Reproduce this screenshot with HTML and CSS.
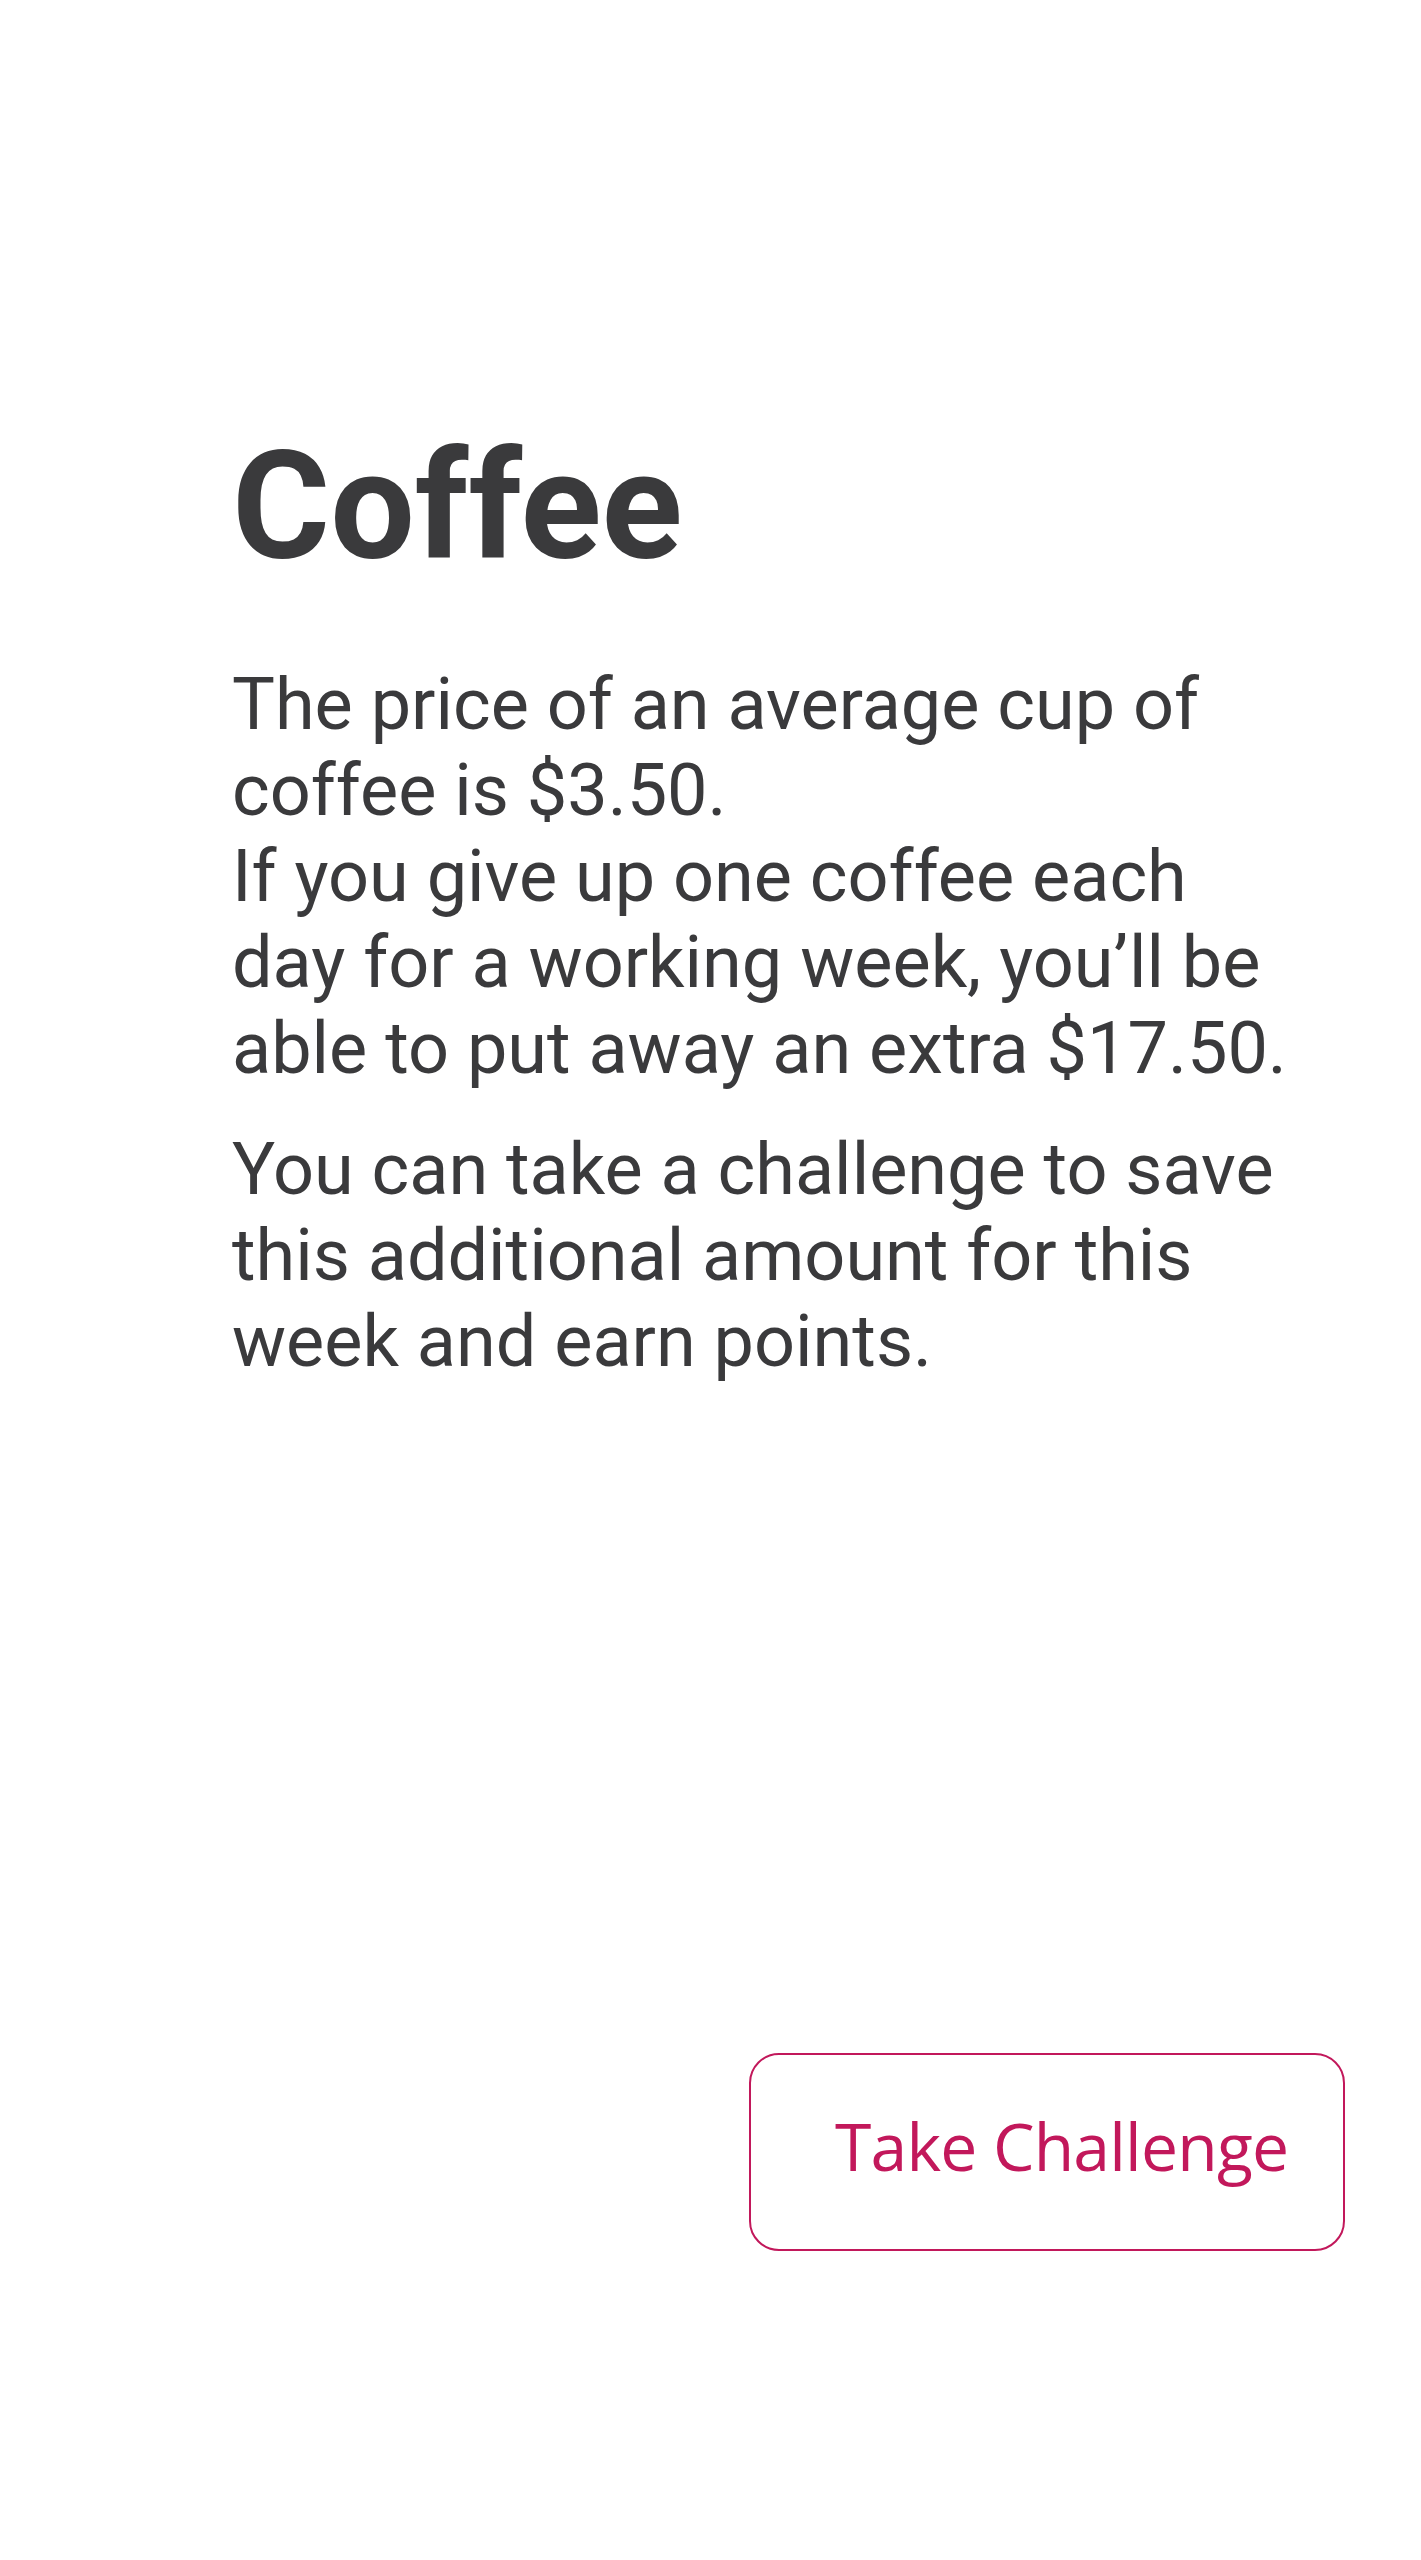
FILE: index.html
```html
<!DOCTYPE html>
<html lang="en">
<head>
<meta charset="utf-8">
<title>Coffee</title>
<link rel="stylesheet" href="styles.css">
</head>
<body>
<main class="screen">
  <section class="content">
    <h1 class="title">Coffee</h1>
    <p class="text">The price of an average cup of<br>coffee is $3.50.<br>If you give up one coffee each<br>day for a working week, you’ll be<br>able to put away an extra $17.50.</p>
    <p class="text second">You can take a challenge to save<br>this additional amount for this<br>week and earn points.</p>
  </section>
  <div class="actions">
    <button class="challenge-btn" type="button">Take Challenge</button>
  </div>
</main>
</body>
</html>
```

FILE: styles.css
```css
html, body {
  margin: 0;
  padding: 0;
  background: #ffffff;
}

.screen {
  width: 1421px;
  height: 2560px;
  box-sizing: border-box;
  padding-top: 432px;
  display: flex;
  flex-direction: column;
}

.content {
  padding-left: 232px;
  color: #3a3a3c;
  font-family: Roboto, "Liberation Sans", sans-serif;
}

.title {
  margin: 0;
  font-size: 150px;
  line-height: 150px;
  font-weight: 700;
}

.text {
  margin: 80px 0 0 0;
  font-size: 72px;
  line-height: 86px;
  font-weight: 400;
}

.text.second {
  margin-top: 35px;
}

.actions {
  margin-top: 668px;
  display: flex;
  justify-content: flex-end;
  padding-right: 76px;
}

.challenge-btn {
  width: 596px;
  height: 198px;
  box-sizing: border-box;
  border: 2px solid #c2185b;
  border-radius: 30px;
  background: #ffffff;
  color: #c2185b;
  font-family: "Open Sans", "Noto Sans", sans-serif;
  font-size: 66px;
  letter-spacing: -0.8px;
  font-weight: 400;
  padding: 0 0 14px 84px;
  text-align: left;
}
```
